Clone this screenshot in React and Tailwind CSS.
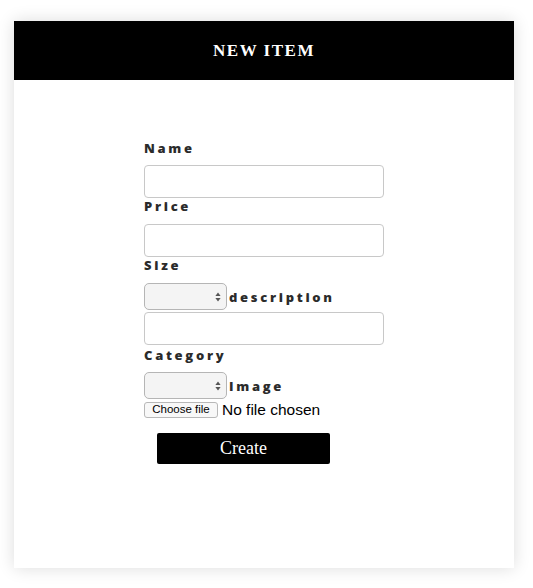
import React from 'react'

const labelCls =
  "block text-[13px] leading-[16px] font-extrabold tracking-[2.7px] text-[#2b2b2b] font-['Open_Sans',sans-serif]"

function SelectBox() {
  return (
    <div className="relative w-[83px] h-[27px] shrink-0 rounded-[5px] border border-[#b5b5b5] bg-[#f4f4f4]">
      <svg
        className="absolute right-[5px] top-1/2 -translate-y-1/2"
        width="6"
        height="10"
        viewBox="0 0 6 10"
      >
        <path d="M3 0.5 L5.6 4 H0.4 Z" fill="#555" />
        <path d="M3 9.5 L5.6 6 H0.4 Z" fill="#555" />
      </svg>
    </div>
  )
}

function TextBox() {
  return <div className="w-[240px] h-[33px] rounded-[4px] border border-[#c8c8c8] bg-white" />
}

export default function App() {
  return (
    <div className="min-h-[588px] bg-white pt-[21px] pl-[14px]">
      <div className="w-[500px] h-[547px] bg-white shadow-[0_0_16px_rgba(0,0,0,0.14)]">
        <div className="h-[59px] bg-black flex items-center justify-center">
          <h1 className="text-white text-[17px] font-bold tracking-[1.5px] font-['Liberation_Serif',serif]">
            NEW ITEM
          </h1>
        </div>

        <form className="pl-[130px] pt-[60px] flex flex-col items-start">
          <label className={labelCls}>Name</label>
          <div className="mt-[9px]">
            <TextBox />
          </div>
          <label className={labelCls}>Price</label>
          <div className="mt-[10px]">
            <TextBox />
          </div>
          <label className={labelCls}>Size</label>
          <div className="mt-[10px] flex items-center gap-[2px]">
            <SelectBox />
            <label className={labelCls}>description</label>
          </div>
          <div className="mt-[2px]">
            <TextBox />
          </div>
          <label className={`${labelCls} mt-[2px]`}>Category</label>
          <div className="mt-[9px] flex items-center gap-[2px]">
            <SelectBox />
            <label className={labelCls}>Image</label>
          </div>
          <div className="mt-[3px] flex items-center gap-[4px] font-['Liberation_Sans',sans-serif]">
            <span className="h-[16px] w-[74px] flex items-center justify-center rounded-[3px] border border-[#b8b8b8] bg-[#f8f8f8] text-[11.5px] text-black">
              Choose file
            </span>
            <span className="text-[15.5px] leading-[14px] text-black">No file chosen</span>
          </div>
          <button
            type="button"
            className="mt-[15px] ml-[13px] w-[173px] h-[31px] rounded-[2px] bg-black text-white text-[18px] font-['Liberation_Serif',serif]"
          >
            Create
          </button>
        </form>
      </div>
    </div>
  )
}
